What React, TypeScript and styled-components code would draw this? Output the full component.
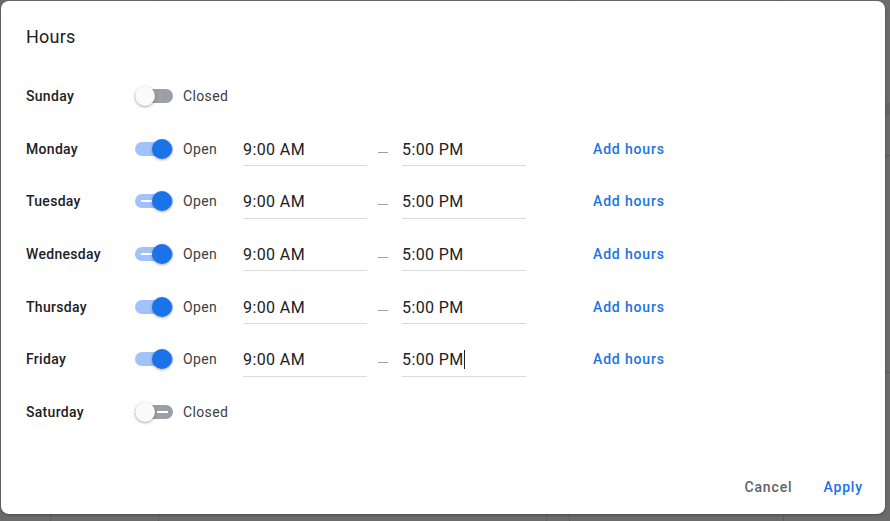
import React from 'react';
import styled, { createGlobalStyle } from 'styled-components';

const GlobalStyle = createGlobalStyle`
  html, body {
    margin: 0;
    padding: 0;
    background: #6b6b6b;
    font-family: Roboto, "Liberation Sans", Arial, sans-serif;
    -webkit-font-smoothing: antialiased;
  }
`;

const Backdrop = styled.div`
  position: relative;
  width: 890px;
  height: 521px;
  overflow: hidden;
  background-color: #6b6b6b;
  background-image:
    linear-gradient(#5d5d5d, #5d5d5d),
    linear-gradient(#5d5d5d, #5d5d5d),
    linear-gradient(#5d5d5d, #5d5d5d),
    linear-gradient(#5d5d5d, #5d5d5d),
    linear-gradient(#5d5d5d, #5d5d5d),
    linear-gradient(#5d5d5d, #5d5d5d),
    linear-gradient(#5d5d5d, #5d5d5d),
    linear-gradient(#646464, #646464);
  background-repeat: no-repeat;
  background-size: 1px 521px, 1px 521px, 1px 521px, 1px 521px, 1px 521px,
    10px 1px, 10px 1px, 10px 12px;
  background-position: 50px 0, 158px 0, 546px 0, 569px 0, 783px 0,
    885px 155px, 885px 372px, 885px 103px;
`;

const Dialog = styled.div`
  position: absolute;
  top: 1px;
  left: 1px;
  width: 884px;
  height: 513px;
  background: #fff;
  border-radius: 8px;
  box-shadow: 0 1px 3px rgba(0, 0, 0, 0.3);
  display: flex;
  flex-direction: column;
  box-sizing: border-box;
  padding: 24px 0 0 25px;
`;

const Title = styled.h2`
  margin: 0;
  font-size: 18px;
  line-height: 24px;
  font-weight: 400;
  letter-spacing: 0.2px;
  color: #202124;
`;

const List = styled.div`
  margin-top: 20.67px;
  display: flex;
  flex-direction: column;
`;

const Row = styled.div`
  display: flex;
  align-items: center;
  height: 52.67px;
`;

const Day = styled.div`
  width: 109px;
  font-size: 14px;
  font-weight: 500;
  letter-spacing: 0.3px;
  color: #202124;
`;

const Track = styled.div<{ $on: boolean; $mark: boolean }>`
  position: relative;
  width: 38px;
  height: 14px;
  border-radius: 7px;
  background: ${p => (p.$on ? '#a1c2fa' : '#9aa0a6')};

  &::before {
    content: '';
    display: ${p => (p.$mark ? 'block' : 'none')};
    position: absolute;
    top: 6px;
    left: ${p => (p.$on ? '6px' : '22px')};
    width: 11px;
    height: 2px;
    background: #fff;
  }
`;

const Thumb = styled.div<{ $on: boolean }>`
  position: absolute;
  top: -3px;
  left: ${p => (p.$on ? '17px' : '0')};
  width: 20px;
  height: 20px;
  border-radius: 50%;
  background: ${p => (p.$on ? '#1a73e8' : '#fafafa')};
  box-shadow: 0 1px 3px rgba(0, 0, 0, 0.35);
`;

const Status = styled.div`
  width: 60px;
  margin-left: 10px;
  font-size: 14px;
  letter-spacing: 0.35px;
  color: #3c4043;
`;

const TimeField = styled.div`
  width: 124px;
  height: 32px;
  border-bottom: 1px solid #dadce0;
  display: flex;
  align-items: center;
  margin-top: 2px;
  font-size: 16px;
  letter-spacing: 0.4px;
  color: #202124;
`;

const Caret = styled.span`
  display: inline-block;
  width: 1px;
  height: 19px;
  background: #202124;
`;

const Dash = styled.div`
  width: 35px;
  display: flex;
  padding: 7px 0 0 11px;
  box-sizing: border-box;

  &::after {
    content: '';
    width: 10px;
    height: 1px;
    background: #9aa0a6;
  }
`;

const LinkButton = styled.button<{ $muted?: boolean }>`
  border: 0;
  background: none;
  padding: 0;
  font-family: inherit;
  font-size: 14px;
  font-weight: 500;
  letter-spacing: 0.85px;
  color: ${p => (p.$muted ? '#5f6368' : '#1a73e8')};
  cursor: pointer;
`;

const AddHours = styled(LinkButton)`
  margin-left: 67px;
`;

const Footer = styled.div`
  margin-top: auto;
  display: flex;
  justify-content: flex-end;
  align-items: center;
  gap: 31px;
  padding: 0 22px 17px 0;
  height: 20px;
`;

type DayHours = {
  name: string;
  open: boolean;
  mark?: boolean;
  caret?: boolean;
};

const days: DayHours[] = [
  { name: 'Sunday', open: false },
  { name: 'Monday', open: true },
  { name: 'Tuesday', open: true, mark: true },
  { name: 'Wednesday', open: true, mark: true },
  { name: 'Thursday', open: true },
  { name: 'Friday', open: true, caret: true },
  { name: 'Saturday', open: false, mark: true },
];

const Toggle = ({ on, mark }: { on: boolean; mark?: boolean }) => (
  <Track $on={on} $mark={!!mark}>
    <Thumb $on={on} />
  </Track>
);

const App = () => {
  return (
    <Backdrop>
      <GlobalStyle />
      <Dialog>
        <Title>Hours</Title>
        <List>
          {days.map(d => (
            <Row key={d.name}>
              <Day>{d.name}</Day>
              <Toggle on={d.open} mark={d.mark} />
              <Status>{d.open ? 'Open' : 'Closed'}</Status>
              {d.open && (
                <>
                  <TimeField>9:00 AM</TimeField>
                  <Dash />
                  <TimeField>
                    5:00 PM{d.caret && <Caret />}
                  </TimeField>
                  <AddHours>Add hours</AddHours>
                </>
              )}
            </Row>
          ))}
        </List>
        <Footer>
          <LinkButton $muted>Cancel</LinkButton>
          <LinkButton>Apply</LinkButton>
        </Footer>
      </Dialog>
    </Backdrop>
  );
};

export default App;
